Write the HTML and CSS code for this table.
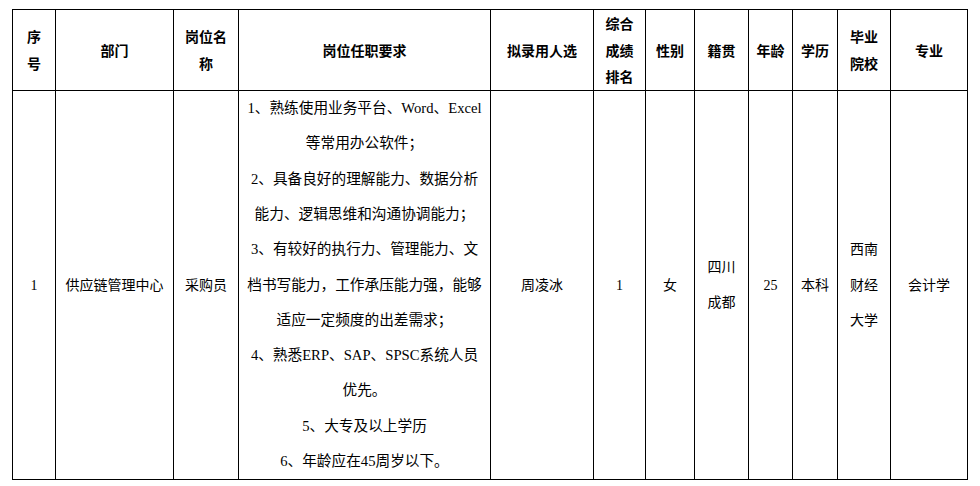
FILE: index.html
```html
<!DOCTYPE html>
<html lang="zh-CN">
<head>
<meta charset="utf-8">
<title>拟录用人选公示</title>
<link rel="stylesheet" href="styles.css">
</head>
<body>
<table class="grid">
  <colgroup>
    <col class="c1"><col class="c2"><col class="c3"><col class="c4"><col class="c5"><col class="c6">
    <col class="c7"><col class="c8"><col class="c9"><col class="c10"><col class="c11"><col class="c12">
  </colgroup>
  <thead>
    <tr>
      <th>序<br>号</th>
      <th>部门</th>
      <th>岗位名<br>称</th>
      <th>岗位任职要求</th>
      <th>拟录用人选</th>
      <th>综合<br>成绩<br>排名</th>
      <th>性别</th>
      <th>籍贯</th>
      <th>年龄</th>
      <th>学历</th>
      <th>毕业<br>院校</th>
      <th>专业</th>
    </tr>
  </thead>
  <tbody>
    <tr>
      <td>1</td>
      <td>供应链管理中心</td>
      <td>采购员</td>
      <td class="req">
        <span class="ln">1、熟练使用业务平台、Word、Excel</span>
        <span class="ln">等常用办公软件；</span>
        <span class="ln">2、具备良好的理解能力、数据分析</span>
        <span class="ln">能力、逻辑思维和沟通协调能力；</span>
        <span class="ln">3、有较好的执行力、管理能力、文</span>
        <span class="ln">档书写能力，工作承压能力强，能够</span>
        <span class="ln">适应一定频度的出差需求；</span>
        <span class="ln">4、熟悉ERP、SAP、SPSC系统人员</span>
        <span class="ln">优先。</span>
        <span class="ln">5、大专及以上学历</span>
        <span class="ln">6、年龄应在45周岁以下。</span>
      </td>
      <td>周凌冰</td>
      <td>1</td>
      <td>女</td>
      <td class="multi">四川<br>成都</td>
      <td>25</td>
      <td>本科</td>
      <td class="multi">西南<br>财经<br>大学</td>
      <td>会计学</td>
    </tr>
  </tbody>
</table>
</body>
</html>
```
FILE: styles.css
```css
html, body {
  margin: 0;
  background: #ffffff;
}
body {
  padding: 9px 0 0 12px;
  font-family: "Liberation Serif", "Noto Sans CJK SC", serif;
  font-size: 14px;
  color: #000000;
}
.grid {
  border-collapse: collapse;
  table-layout: fixed;
  width: 956px;
}
.c1 { width: 43px; }
.c2 { width: 118px; }
.c3 { width: 65px; }
.c4 { width: 252px; }
.c5 { width: 103px; }
.c6 { width: 52px; }
.c7 { width: 49px; }
.c8 { width: 54px; }
.c9 { width: 44px; }
.c10 { width: 45px; }
.c11 { width: 53px; }
.c12 { width: 77px; }
.grid th,
.grid td {
  border: 1px solid #000000;
  padding: 0;
  text-align: center;
  vertical-align: middle;
  white-space: nowrap;
}
.grid th {
  font-weight: bold;
  font-family: "Noto Sans CJK SC", "Liberation Sans", sans-serif;
  line-height: 26.67px;
  height: 80px;
}
.grid td {
  line-height: 35.3px;
  height: 388px;
}
.grid td.req {
  font-size: 14.67px;
}
.req .ln {
  display: block;
}
```
